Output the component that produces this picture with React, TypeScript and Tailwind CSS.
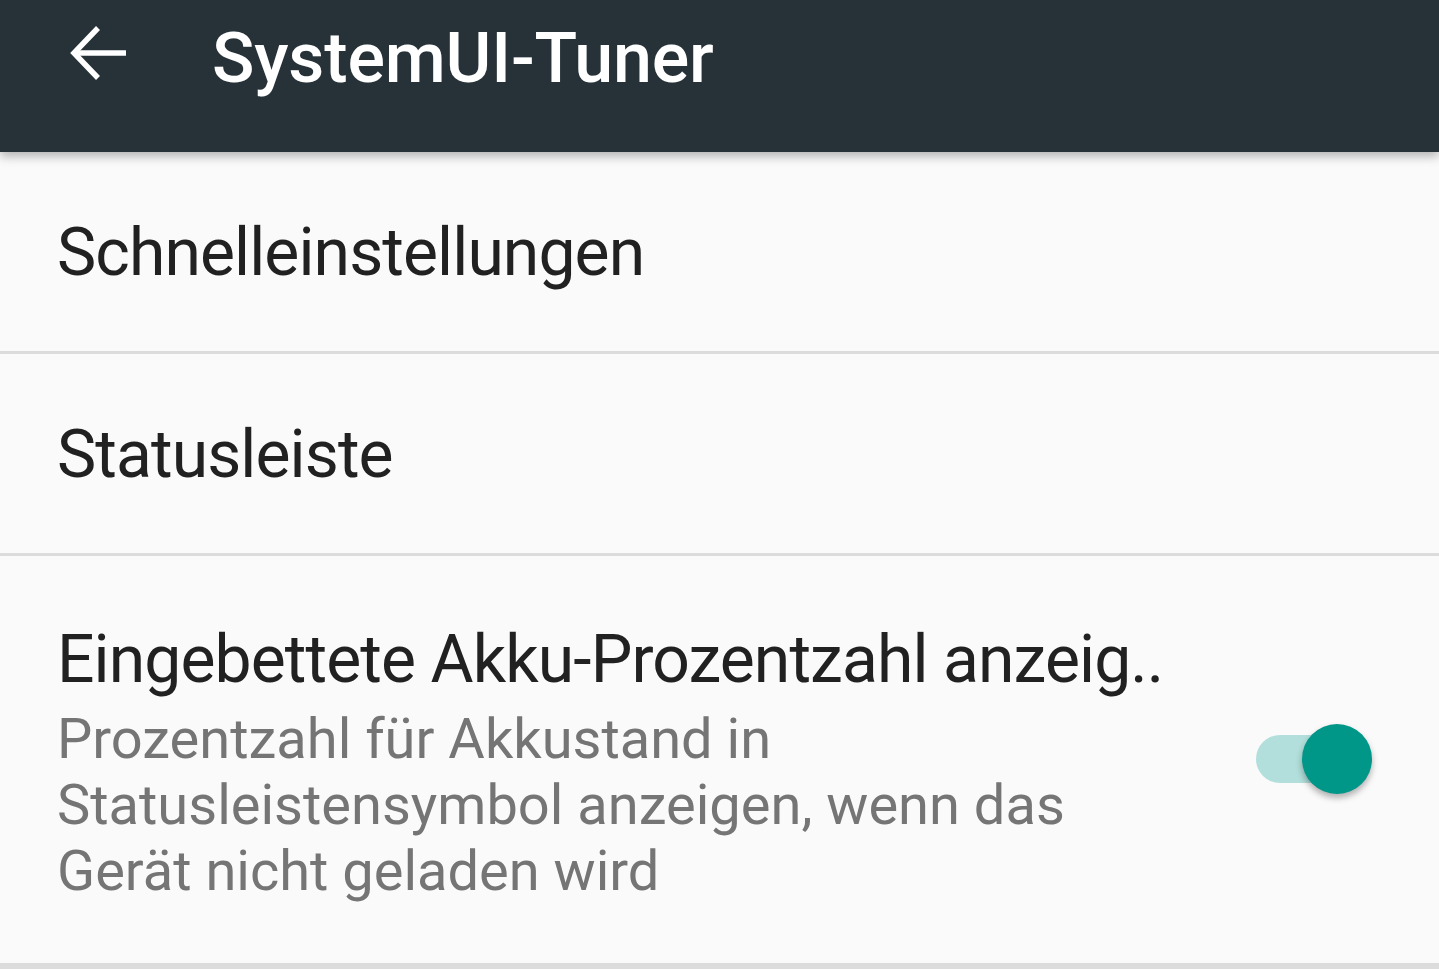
import React from "react";

function BackArrow() {
  return (
    <svg width="60" height="60" viewBox="0 0 60 60" fill="none" stroke="white" strokeWidth="5.5" strokeLinecap="butt">
      <path d="M58 27H6" />
      <path d="M30 2L6 27L30 52" strokeLinejoin="miter" />
    </svg>
  );
}

function Toggle() {
  return (
    <div className="relative w-[116px] h-[72px] flex items-center">
      <div className="w-[90px] h-[48px] rounded-full bg-[#b2dfdb]" />
      <div className="absolute right-0 top-[1px] w-[70px] h-[70px] rounded-full bg-[#009688] shadow-[0_4px_6px_rgba(0,0,0,0.3)]" />
    </div>
  );
}

export default function App() {
  return (
    <div
      className="w-[1439px] h-[969px] overflow-hidden bg-[#fafafa] flex flex-col"
      style={{ fontFamily: "Roboto, 'Noto Sans', sans-serif" }}
    >
      <header className="relative z-10 h-[152px] shrink-0 bg-[#263238] flex items-start shadow-[0_4px_10px_rgba(0,0,0,0.3)]">
        <div className="ml-[68px] mt-[26px]">
          <BackArrow />
        </div>
        <h1 className="ml-[84px] mt-[14px] text-white text-[70px] font-medium leading-[88px] tracking-[-0.15px]">
          SystemUI-Tuner
        </h1>
      </header>

      <div className="h-[199px] shrink-0 flex items-center pl-[57px]">
        <span className="text-[#212121] text-[66px] leading-none tracking-[-0.9px] mt-[3px]">Schnelleinstellungen</span>
      </div>
      <div className="h-[3px] shrink-0 bg-[#dcdcdc]" />

      <div className="h-[199px] shrink-0 flex items-center pl-[57px]">
        <span className="text-[#212121] text-[66px] leading-none tracking-[-0.9px] mt-[3px]">Statusleiste</span>
      </div>
      <div className="h-[3px] shrink-0 bg-[#dcdcdc]" />

      <div className="h-[407px] shrink-0 flex items-start pl-[57px] pr-[67px]">
        <div className="flex-1 pt-[66px]">
          <div className="text-[#212121] text-[66px] leading-[76px] tracking-[-0.9px] whitespace-nowrap">
            Eingebettete Akku-Prozentzahl anzeig..
          </div>
          <div className="text-[#757575] text-[56px] leading-[66px] mt-[8px] w-[1080px]">
            Prozentzahl für Akkustand in Statusleistensymbol anzeigen, wenn das Gerät nicht geladen wird
          </div>
        </div>
        <div className="mt-[167px]">
          <Toggle />
        </div>
      </div>
      <div className="h-[6px] shrink-0 bg-[#dcdcdc]" />
    </div>
  );
}
